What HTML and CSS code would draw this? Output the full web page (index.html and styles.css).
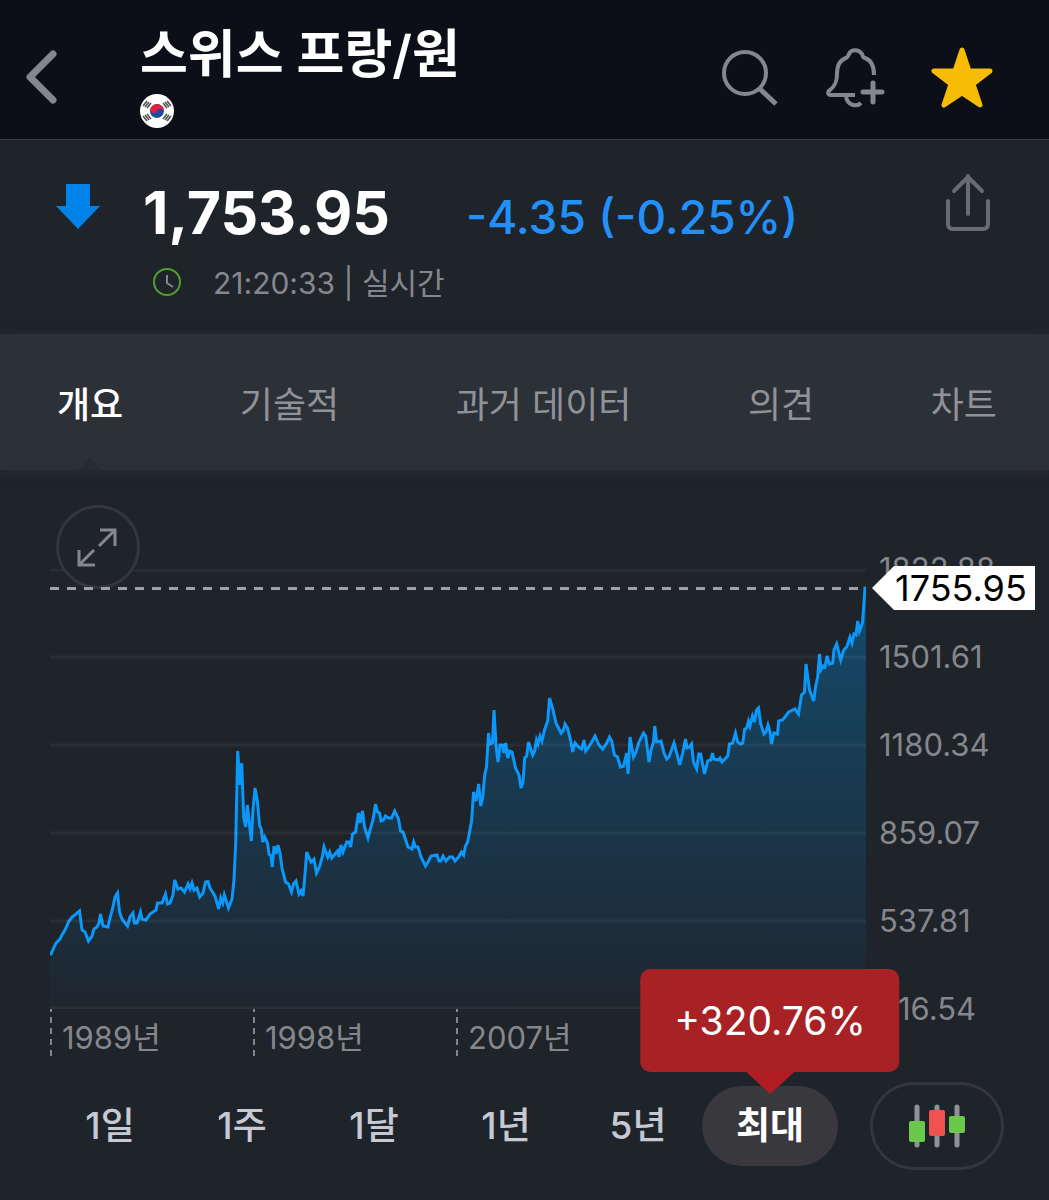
FILE: index.html
```html
<!DOCTYPE html>
<html lang="ko">
<head>
    <meta charset="UTF-8">
    <meta name="viewport" content="width=device-width, initial-scale=1.0">
    <title>스위스 프랑/원</title>
    <link rel="stylesheet" href="styles.css">
</head>
<body>
    <header class="topbar">
        <button class="icon-btn back" aria-label="뒤로">
            <svg width="32" height="54" viewBox="0 0 32 54" fill="none" stroke="#85878f" stroke-width="7" stroke-linecap="round" stroke-linejoin="round">
                <path d="M27 4 4 27 27 50"/>
            </svg>
        </button>
        <div class="title-block">
            <h1>스위스 프랑/원</h1>
            <svg class="flag" viewBox="0 0 34 34" aria-hidden="true">
                <circle cx="17" cy="17" r="17" fill="#fff"/>
                <g transform="rotate(25 17 17)">
                    <circle cx="17" cy="17" r="7" fill="#1c4ba0"/>
                    <path d="M10 17a7 7 0 0 1 14 0a3.5 3.5 0 0 0-7 0a3.5 3.5 0 0 1-7 0z" fill="#e0213f"/>
                </g>
                <g stroke="#55564f" stroke-width="1.6">
                    <path d="M3 12l4-5M5 13l4-5M7 14l4-5"/>
                    <path d="M31 12l-4-5M29 13l-4-5M27 14l-4-5"/>
                    <path d="M3 22l4 5M5 21l4 5M7 20l4 5"/>
                    <path d="M31 22l-4 5M29 21l-4 5M27 20l-4 5"/>
                </g>
            </svg>
        </div>
        <div class="actions">
            <button class="icon-btn" aria-label="검색">
                <svg width="62" height="62" viewBox="0 0 62 62" fill="none" stroke="#85878f">
                    <circle cx="26" cy="27" r="21" stroke-width="4"/>
                    <path d="M41 43 57 58" stroke-width="5"/>
                </svg>
            </button>
            <button class="icon-btn" aria-label="알림 추가">
                <svg width="62" height="62" viewBox="0 0 62 62" fill="none" stroke="#85878f" stroke-width="4" stroke-linejoin="round">
                    <path d="M49 29C49 19 46 14 40 12C38 12 38 10 37 8C34 3 26 3 24 8C23 10 23 11 21 12C15 14 12 19 12 28C12 36 10 40 5 44C2 46 3 49 6 49H30"/>
                    <path d="M21 50C22 60 32 61 36 57"/>
                    <path d="M48 37V56M38 46H57" stroke-width="5" stroke-linecap="round"/>
                </svg>
            </button>
            <button class="icon-btn" aria-label="즐겨찾기">
                <svg width="62" height="62" viewBox="0 0 62 62" fill="#f7bd05" stroke="#f7bd05" stroke-width="5" stroke-linejoin="round">
                    <path d="M31 4 38 25H59L42 38 49 59 31 47 13 59 20 38 3 25H24Z"/>
                </svg>
            </button>
        </div>
    </header>

    <section class="quote">
        <svg class="down-arrow" viewBox="0 0 44 46" fill="#0182e8" aria-label="하락">
            <path d="M10 0H34V22H44L22 45 0 22H10Z"/>
        </svg>
        <div class="quote-main">
            <div class="price-row">
                <strong class="price">1,753.95</strong>
                <span class="change">-4.35 (-0.25%)</span>
            </div>
            <div class="meta-row">
                <svg width="30" height="30" viewBox="0 0 30 30" fill="none" aria-hidden="true">
                    <circle cx="15" cy="14" r="13" stroke="#4f9e2f" stroke-width="2"/>
                    <path d="M15 7V15L21 19" stroke="#85878f" stroke-width="2"/>
                </svg>
                <span>21:20:33 | 실시간</span>
            </div>
        </div>
        <button class="icon-btn" aria-label="공유">
            <svg width="48" height="60" viewBox="0 0 48 60" fill="none" stroke="#696b73" stroke-width="4" stroke-linecap="round" stroke-linejoin="round">
                <path d="M24 2V40M10 17 24 3 38 17"/>
                <path d="M4 27V50Q4 55 9 55H39Q44 55 44 50V27"/>
            </svg>
        </button>
    </section>

    <nav class="tabs">
        <a href="#overview" class="tab active">개요</a>
        <a href="#technical" class="tab">기술적</a>
        <a href="#history" class="tab">과거 데이터</a>
        <a href="#opinion" class="tab">의견</a>
        <a href="#chart" class="tab">차트</a>
    </nav>

    <main class="chart-panel">
        <div class="chart">
            <div class="plot-col">
                <div class="plot">
                    <svg class="plot-svg" viewBox="50 569 816 440" preserveAspectRatio="none" role="img" aria-label="최대 기간 차트">
                        <defs>
                            <linearGradient id="areaFill" gradientUnits="userSpaceOnUse" x1="0" y1="588" x2="0" y2="1009">
                                <stop offset="0" stop-color="#0090e0" stop-opacity="0.36"/>
                                <stop offset="1" stop-color="#0090e0" stop-opacity="0.03"/>
                            </linearGradient>
                        </defs>
                        <!-- first and last points lie outside the view box so the area closes off screen -->
                        <polyline class="series" fill="url(#areaFill)" points="30,1030 30,954 51,954 56,943 60,939 62,935 65,930 69,921 72,917 76,914 79.5,911 82,930 85,932 88.5,941 92,936 94,929 97,927 99,923 100.5,914 103,926 108,927 110,918 113,907 115,897 117.5,893 119.5,912 122,919 125,923 127.5,926 130,917 133,913 134.5,923 137,923 140.5,912 142,919 146,920 150,914 156,910 157.5,903 162,903 165.5,894 167.5,904 170,903 173,895 174.7,880 178,889 181,888 184.5,892 188,884 190,889 192,883 194,890 197,888 199.7,897 203,893 205.5,882 208,881.5 210,888 215,896 218.7,909 220.7,898 222.7,903 224.3,895 228.5,908 232,899 234,880 235.7,843 237.7,751 240,785 241.7,763 243.7,817 245.7,827 247.3,805 251.3,841 253,810 255,788 257.5,802 259.5,825 261.5,830 262.7,842 264.7,837 267.5,843 269,854 271,856 272.3,867 274,846 276,854 278,845 280,853 282,868 285.5,882 288.5,884 291.5,892 293.5,884 296,881 299,894 301,891 303,896 304.7,878 306.7,852 311,862 314,859 316.5,873 319.5,867 322.5,856 324,847 327.7,857 329.7,852 331.7,858 337.5,851 339,857 341,845 343,852 346.7,842 349,842 350.7,847 352.5,834 355.5,832 358.5,813 360,823 362.5,811 364.5,827 368,838 370,830 373,820 375.5,804 377.5,812 379.5,813 381,821 383.5,820 385.5,816 388.5,818 391.5,818 394.7,811 398.5,819 400.5,831 403,832 408,847 412,849 413.7,842 415.5,847 418,847 421,857 425.5,866 428,862 431,856 437,855 439,861 441,861 443,856 446,861 449.5,857 452.5,857 455,861 458.5,857 461.5,852 463.7,855 465.5,846 467.7,842 471.7,820 473.5,792 476,801 478.7,784 480.7,806 482.7,797 484.7,775 486.5,767 488.5,733 490,744 492.5,743 494,710 496,745 498,762 500,745 502.5,745 504,753 505.7,743 507.7,758 509.7,751 512,752 515.5,768 519,775 521,788 523,782 524.7,758 526.7,756 528.5,742 532.7,755 534.7,751 536.5,740 538,744 540,736 542,741 544.5,730 547.7,721 549.5,698 552.5,708 556,723 561,733 563.5,730 565,724 567.5,728 570.5,740 572.7,752 575,743 578.5,747 581.7,749 584,740 585.7,751 588,748 591.7,742 595,736 599,745 602.7,749 606.7,743 609.5,737 611.7,741 614.5,755 617.5,757 620.5,767 623.5,766 626.7,753 628,774 630,737 633.5,757 635.7,753 639,742 643.5,733 645.7,736 649,762 651,750 653.5,742 654.7,726 656.7,742 661,741 664,753 666.7,759 669,757 674,743 676.7,753 679.7,765 682.7,753 685.5,739 687,748 689.5,747 691.5,744 693.5,762 696.7,769 698.7,754 700.7,754 704.5,774 707.7,761 710.7,760 712.5,753 714,759 718,760 720,758 722,762 727.7,756 729.5,744 732.7,743 735.5,733 737.7,742 740.5,744 742.7,743 744.7,729 746.7,728 748.5,721 750,726 752.5,716 754.5,722 756.5,710 758.5,708 760.7,724 764,734 766,732 768,725 770,732 771.5,744 774,733 777.5,734 778.7,721 782.7,720 788.7,712 795,709 798.5,714 801.5,695 804.5,692 806,664 809.5,690 813.7,701 815.5,687 817.7,677 819.5,654 821,670 823.5,666 825,667 827,656 829.5,664 832.7,663 834,650 836.7,644 840.7,660 843.7,650 846.7,647 850,637 852,643 854,634 856,635 857.7,621 859.5,631 862.5,623 865,588 886,588 886,1030"/>
                        <path class="grid-lines" d="M50 570H866M50 657H866M50 745H866M50 833H866M50 921H866M50 1008H866"/>
                    </svg>
                    <button class="expand" aria-label="전체 화면">
                        <svg width="42" height="42" viewBox="0 0 42 42" fill="none" stroke="#85878a" stroke-width="3">
                            <path d="M23 4H38V20M38 4 22 20M2 24V39H18M2 39 17 24"/>
                        </svg>
                    </button>
                    <div class="price-line"></div>
                    <div class="price-tag">1755.95</div>
                </div>
                <div class="x-axis">
                    <span>1989년</span>
                    <span>1998년</span>
                    <span>2007년</span>
                </div>
            </div>
            <div class="y-axis">
                <span>1822.88</span>
                <span>1501.61</span>
                <span>1180.34</span>
                <span>859.07</span>
                <span>537.81</span>
                <span>216.54</span>
            </div>
        </div>

        <div class="controls">
            <div class="periods">
                <button class="period">1일</button>
                <button class="period">1주</button>
                <button class="period">1달</button>
                <button class="period">1년</button>
                <button class="period">5년</button>
                <button class="period active">최대<span class="tooltip">+320.76%</span></button>
            </div>
            <button class="candle-btn" aria-label="캔들 차트">
                <svg width="58" height="44" viewBox="0 0 58 44" aria-hidden="true">
                    <path d="M9 3V41M29 3V41M49 3V41" stroke="#909296" stroke-width="5" stroke-linecap="round"/>
                    <rect x="1" y="17" width="16" height="21" rx="2" fill="#6ac94a"/>
                    <rect x="21" y="6" width="16" height="26" rx="2" fill="#ef5350"/>
                    <rect x="41" y="12" width="16" height="17" rx="2" fill="#6ac94a"/>
                </svg>
            </button>
        </div>
    </main>
</body>
</html>
```

FILE: styles.css
```css
* {
    margin: 0;
    padding: 0;
    box-sizing: border-box;
}

body {
    font-family: Inter, "Noto Sans CJK KR", sans-serif;
    background-color: #1f232a;
    color: #fff;
}

button {
    background: none;
    border: none;
    color: inherit;
    font-family: inherit;
    cursor: pointer;
}

svg {
    display: block;
}

.icon-btn {
    flex: none;
}

/* Header */
.topbar {
    display: flex;
    align-items: center;
    padding: 25px 56px 11px 26px;
    background-color: #0c0f17;
    border-bottom: 1px solid #3b3e45;
}

.title-block {
    flex: 1;
    margin-left: 82px;
}

h1 {
    font-size: 52px;
    font-weight: 600;
    line-height: 60px;
}

.flag {
    width: 34px;
    height: 34px;
    margin-top: 9px;
}

.actions {
    display: flex;
    gap: 44px;
}

/* Quote */
.quote {
    display: flex;
    align-items: flex-start;
    padding: 34px 57px 31px 56px;
}

.down-arrow {
    width: 44px;
    height: 46px;
    margin-top: 10px;
}

.quote-main {
    flex: 1;
    margin-left: 43px;
    padding-top: 3px;
}

.price-row {
    display: flex;
    align-items: baseline;
    gap: 76px;
}

.price {
    font-size: 59px;
    font-weight: 700;
    line-height: 72px;
}

.change {
    font-size: 46px;
    font-weight: 500;
    color: #2390f8;
}

.meta-row {
    display: flex;
    align-items: center;
    gap: 31px;
    margin-top: 14px;
    padding-left: 9px;
    font-size: 30px;
    line-height: 40px;
    color: #85878d;
}

/* Tabs */
.tabs {
    display: flex;
    justify-content: space-between;
    padding: 0 52px 0 57px;
    background-color: #2c3037;
    border-bottom: 1px solid #23272d;
    box-shadow: 0 2px 12px rgba(44, 48, 55, 0.8);
}

.tab {
    position: relative;
    padding: 51px 0 45px;
    font-size: 36px;
    line-height: 40px;
    color: #919297;
    text-decoration: none;
}

.tab.active {
    color: #fff;
    font-weight: 500;
}

.tab.active::after {
    content: "";
    position: absolute;
    left: 50%;
    bottom: 0;
    transform: translateX(-50%);
    border: 12px solid transparent;
    border-top: none;
    border-bottom-color: #272b32;
}

/* Chart */
.chart-panel {
    padding-top: 80px;
}

.chart {
    display: grid;
    grid-template-columns: 1fr 170px;
    column-gap: 13px;
    padding-left: 50px;
}

.plot-col {
    padding-top: 18px;
}

.plot {
    position: relative;
}

.plot-svg {
    width: 100%;
    height: 440px;
}

.series {
    stroke: #0c97fb;
    stroke-width: 3;
    vector-effect: non-scaling-stroke;
}

.grid-lines {
    stroke: rgba(255, 255, 255, 0.05);
    stroke-width: 3;
    vector-effect: non-scaling-stroke;
}

.expand {
    position: absolute;
    top: -64px;
    left: 6px;
    display: flex;
    align-items: center;
    justify-content: center;
    width: 84px;
    height: 84px;
    background-color: #1f232a;
    border: 3px solid #33363d;
    border-radius: 50%;
}

.price-line {
    position: absolute;
    top: 18px;
    left: 0;
    right: 0;
    height: 3px;
    background: repeating-linear-gradient(to right, #a0a2a6 0 9px, transparent 9px 17px);
}

.price-tag {
    position: absolute;
    top: -3px;
    left: calc(100% + 28px);
    z-index: 1;
    width: 141px;
    padding-left: 1px;
    background-color: #fff;
    color: #000;
    font-size: 36px;
    line-height: 44px;
}

.price-tag::before {
    content: "";
    position: absolute;
    top: 0;
    right: 100%;
    border: 22px solid transparent;
    border-left: none;
    border-right-color: #fff;
}

.y-axis {
    display: grid;
    align-content: start;
    gap: 52px;
    font-size: 31px;
    line-height: 36px;
    color: #85878d;
}

.x-axis {
    display: grid;
    grid-template-columns: repeat(4, 1fr);
    padding-right: 4px;
}

.x-axis span {
    padding: 11px 0 1px 12px;
    font-size: 31px;
    line-height: 36px;
    color: #85878d;
    background: repeating-linear-gradient(#85878d 0 3px, transparent 3px 8px, #85878d 8px 11px) 0 0 / 2px 100% no-repeat;
}

/* Period buttons */
.controls {
    display: flex;
    align-items: center;
    gap: 34px;
    padding: 25px 45px 30px 44px;
}

.periods {
    flex: 1;
    display: grid;
    grid-template-columns: repeat(6, 1fr);
}

.period {
    position: relative;
    height: 80px;
    color: #c6c9d3;
    font-size: 37px;
    font-weight: 500;
    line-height: 40px;
    white-space: nowrap;
}

.period.active {
    margin: 0 -2px;
    background-color: #38383d;
    border-radius: 40px;
    color: #fff;
    font-weight: 700;
}

.tooltip {
    position: absolute;
    bottom: calc(100% + 14px);
    left: 50%;
    transform: translateX(-50%);
    padding: 32px 34px 31px;
    background-color: #a82125;
    border-radius: 10px;
    font-size: 39px;
    font-weight: 400;
    line-height: 40px;
}

.tooltip::after {
    content: "";
    position: absolute;
    top: 100%;
    left: 50%;
    transform: translateX(-50%);
    border: 24px solid transparent;
    border-top: 22px solid #b01e23;
    border-bottom: none;
}

.candle-btn {
    display: flex;
    align-items: center;
    justify-content: center;
    width: 134px;
    height: 88px;
    border: 3px solid #34363d;
    border-radius: 44px;
}
```
